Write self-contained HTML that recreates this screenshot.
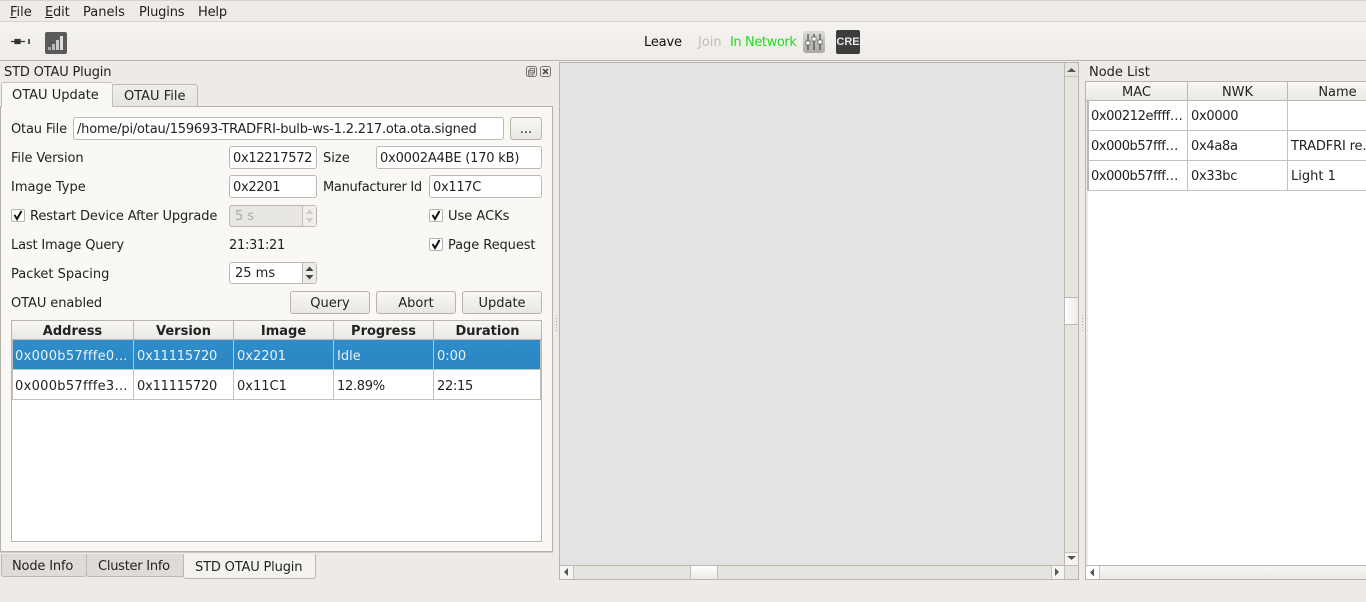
<!DOCTYPE html>
<html><head><meta charset="utf-8"><style>
*{box-sizing:border-box}
html,body{margin:0;padding:0;width:1366px;height:602px;overflow:hidden;background:#eeebe6}
body{position:relative;font-family:"DejaVu Sans",sans-serif;font-size:13px;color:#222}
.a{position:absolute}
.t{position:absolute;white-space:nowrap;line-height:16px;height:16px}
.n{letter-spacing:-.3px}
.s{letter-spacing:-.17px}
.f{position:absolute;background:#fff;border:1px solid #bdb9b2;border-radius:3px;height:23px;line-height:23px;padding-left:3px;white-space:nowrap;overflow:hidden;color:#222}
.b{position:absolute;border:1px solid #b8b4ad;border-radius:3px;height:23px;line-height:23px;text-align:center;background:linear-gradient(#f8f7f5,#e9e7e3);color:#222}
.c{position:absolute;width:14px;height:13px;border:1px solid #b8b4ad;border-radius:2px;background:#fff}
.hd{position:absolute;background:linear-gradient(#f8f7f5,#ebe9e5);border-right:1px solid #bdb9b2;border-bottom:1px solid #bdb9b2;text-align:center;height:19px;line-height:18px;padding-top:2px}
.ln{position:absolute;background:#c4c1bb}
.dot{position:absolute;width:1px;height:1px;background:#aaa}
</style></head><body>

<div class="a" style="left:0;top:0;width:1366px;height:1px;background:#d8d5cf"></div>
<div class="a" style="left:0;top:1px;width:1366px;height:20px;background:#efece7"></div>
<div class="a" style="left:0;top:21px;width:1366px;height:1px;background:#d6d3cd"></div>
<div class="a" style="left:0;top:22px;width:1366px;height:38px;background:linear-gradient(#f5f3ef,#efece7)"></div>
<div class="a" style="left:0;top:60px;width:1366px;height:1px;background:#b9b6b0"></div>
<span class="t" style="left:10px;top:5px"><u>F</u>ile</span>
<span class="t s" style="left:45px;top:5px"><u>E</u>dit</span>
<span class="t" style="left:83px;top:5px">Panels</span>
<span class="t s" style="left:139px;top:5px">Plugins</span>
<span class="t s" style="left:198px;top:5px">Help</span>

<svg class="a" style="left:10px;top:36px" width="22" height="12"><path d="M1 5.500H5M5 3.500H10V7.500H5zM10 5.500H15" stroke="#333" stroke-width="1.2" fill="#333"/><rect x="18" y="3" width="2" height="5" fill="#555"/></svg>
<svg class="a" style="left:45px;top:32px" width="22" height="22"><rect width="22" height="22" rx="2" fill="#5a5a5a"/><rect x="3" y="15" width="3" height="3" fill="#aaa"/><rect x="7" y="12" width="3" height="6" fill="#bbb"/><rect x="11" y="8" width="3" height="10" fill="#ccc"/><rect x="15" y="4" width="3" height="14" fill="#ddd"/></svg>

<span class="t s" style="left:644px;top:35px;color:#111">Leave</span>
<span class="t" style="left:698px;top:35px;color:#bdbdbd">Join</span>
<span class="t" style="left:730px;top:35px;color:#1fdc1f;letter-spacing:-.4px">In Network</span>
<svg class="a" style="left:803px;top:31px" width="22" height="22"><defs><linearGradient id="g" x1="0" y1="0" x2="0" y2="1"><stop offset="0" stop-color="#dddbd7"/><stop offset="1" stop-color="#a9a7a3"/></linearGradient></defs><rect width="22" height="22" rx="3" fill="url(#g)"/><path d="M5 3V19M11 3V19M17 3V19" stroke="#333" stroke-width="1"/><rect x="3" y="10" width="4" height="4" fill="#fff" stroke="#444" stroke-width=".6"/><rect x="9" y="6" width="4" height="4" fill="#fff" stroke="#444" stroke-width=".6"/><rect x="15" y="9" width="4" height="4" fill="#fff" stroke="#444" stroke-width=".6"/></svg>
<div class="a" style="left:836px;top:30px;width:24px;height:24px;background:#3d3d3d;border-radius:2px;color:#e6e6e6;font:bold 11px/25px 'Liberation Sans',sans-serif;text-align:center">CRE</div>

<span class="t s" style="left:4px;top:65px">STD OTAU Plugin</span>
<svg class="a" style="left:526px;top:66px" width="26" height="12"><rect x=".5" y=".5" width="10" height="10" rx="2" fill="none" stroke="#777"/><rect x="4" y="2.500" width="4.500" height="4.500" fill="none" stroke="#777"/><rect x="2.500" y="4.500" width="4.500" height="4.500" fill="none" stroke="#777"/><rect x="14.500" y=".5" width="10" height="10" rx="2" fill="none" stroke="#777"/><path d="M17 3L22 8M22 3L17 8" stroke="#555" stroke-width="1.800"/></svg>

<div class="a" style="left:0;top:106px;width:553px;height:446px;background:#f9f8f5;border:1px solid #b4b1ab;border-left-width:1px"></div>
<div class="a" style="left:0;top:552px;width:553px;height:1px;background:#d0cdc7"></div>
<div class="a" style="left:112px;top:84px;width:86px;height:23px;background:linear-gradient(#efedE9,#e7e5e0);border:1px solid #bdb9b2;border-radius:3px 3px 0 0"></div>
<div class="a" style="left:1px;top:82px;width:112px;height:25px;background:#f9f8f5;border:1px solid #c4c1bb;border-bottom:0;border-radius:3px 3px 0 0"></div>
<span class="t" style="left:12px;top:88px">OTAU Update</span>
<span class="t" style="left:124px;top:89px">OTAU File</span>

<span class="t s" style="left:11px;top:122px">Otau File</span>
<div class="f" style="left:73px;top:117px;width:431px;letter-spacing:-.2px">/home/pi/otau/159693-TRADFRI-bulb-ws-1.2.217.ota.ota.signed</div>
<div class="b" style="left:510px;top:117px;width:32px">...</div>
<span class="t" style="left:11px;top:151px;letter-spacing:-.1px">File Version</span>
<div class="f n" style="left:229px;top:146px;width:88px;padding-left:3px">0x12217572</div>
<span class="t" style="left:323px;top:151px">Size</span>
<div class="f" style="left:376px;top:146px;width:166px;letter-spacing:-.2px">0x0002A4BE (170 kB)</div>
<span class="t" style="left:11px;top:180px">Image Type</span>
<div class="f n" style="left:229px;top:175px;width:88px;padding-left:3px">0x2201</div>
<span class="t n" style="left:323px;top:180px">Manufacturer Id</span>
<div class="f n" style="left:429px;top:175px;width:113px">0x117C</div>

<div class="c" style="left:11px;top:209px"></div>
<svg class="a" style="left:11px;top:208px" width="14" height="14"><path d="M3.500 7L6 11L10.500 3" fill="none" stroke="#111" stroke-width="2"/></svg>
<span class="t" style="left:30px;top:209px;letter-spacing:-.11px">Restart Device After Upgrade</span>
<div class="f" style="left:229px;top:205px;width:88px;height:22px;background:#e9e7e3;color:#aaa;padding-left:5px;line-height:22px">5 s</div>
<div class="a" style="left:302px;top:206px;width:14px;height:20px;background:#f1efeb;border-left:1px solid #c4c1bb"></div>
<svg class="a" style="left:303px;top:207px" width="13" height="18"><path d="M2.500 7L6.500 2.500L10.500 7zM2.500 11L6.500 15.500L10.500 11z" fill="#cfccc7"/></svg>
<div class="c" style="left:429px;top:209px"></div>
<svg class="a" style="left:429px;top:208px" width="14" height="14"><path d="M3.500 7L6 11L10.500 3" fill="none" stroke="#111" stroke-width="2"/></svg>
<span class="t" style="left:448px;top:209px">Use ACKs</span>

<span class="t s" style="left:11px;top:238px">Last Image Query</span>
<span class="t n" style="left:229px;top:238px">21:31:21</span>
<div class="c" style="left:429px;top:238px"></div>
<svg class="a" style="left:429px;top:237px" width="14" height="14"><path d="M3.500 7L6 11L10.500 3" fill="none" stroke="#111" stroke-width="2"/></svg>
<span class="t" style="left:448px;top:238px;letter-spacing:-.08px">Page Request</span>

<span class="t" style="left:11px;top:267px">Packet Spacing</span>
<div class="f" style="left:229px;top:262px;width:88px;height:22px;padding-left:5px;line-height:22px">25 ms</div>
<div class="a" style="left:302px;top:263px;width:14px;height:20px;background:#ecebe7;border-left:1px solid #bdb9b2"></div>
<svg class="a" style="left:303px;top:264px" width="13" height="18"><path d="M2.500 7L6.500 2.500L10.500 7zM2.500 11L6.500 15.500L10.500 11z" fill="#444"/></svg>

<span class="t" style="left:11px;top:296px;letter-spacing:-.08px">OTAU enabled</span>
<div class="b" style="left:290px;top:291px;width:80px">Query</div>
<div class="b" style="left:376px;top:291px;width:80px">Abort</div>
<div class="b" style="left:462px;top:291px;width:80px">Update</div>

<div class="a" style="left:11px;top:320px;width:531px;height:222px;background:#fff;border:1px solid #b8b5af"></div>
<div class="hd" style="left:12px;top:321px;width:122px;font-weight:bold">Address</div>
<div class="hd" style="left:134px;top:321px;width:100px;font-weight:bold">Version</div>
<div class="hd" style="left:234px;top:321px;width:100px;font-weight:bold">Image</div>
<div class="hd" style="left:334px;top:321px;width:100px;font-weight:bold">Progress</div>
<div class="hd" style="left:434px;top:321px;width:107px;font-weight:bold;border-right:0">Duration</div>
<div class="a" style="left:13px;top:340px;width:528px;height:29px;background:linear-gradient(#2f8dc9,#2b86c2)"></div>
<div class="ln" style="left:12px;top:340px;width:1px;height:60px"></div>
<div class="ln" style="left:12px;top:369px;width:529px;height:1px"></div>
<div class="ln" style="left:12px;top:399px;width:529px;height:1px"></div>
<div class="ln" style="left:133px;top:340px;width:1px;height:60px"></div>
<div class="ln" style="left:233px;top:340px;width:1px;height:60px"></div>
<div class="ln" style="left:333px;top:340px;width:1px;height:60px"></div>
<div class="ln" style="left:433px;top:340px;width:1px;height:60px"></div>
<div class="ln" style="left:540px;top:340px;width:1px;height:60px"></div>
<span class="t" style="left:15px;top:349px;color:#e8f2f9;letter-spacing:.3px">0x000b57fffe0…</span>
<span class="t" style="left:137px;top:349px;color:#e8f2f9;letter-spacing:-.2px">0x11115720</span>
<span class="t" style="left:237px;top:349px;color:#e8f2f9">0x2201</span>
<span class="t" style="left:337px;top:349px;color:#e8f2f9">Idle</span>
<span class="t" style="left:437px;top:349px;color:#e8f2f9">0:00</span>
<span class="t" style="left:15px;top:379px;letter-spacing:.3px">0x000b57fffe3…</span>
<span class="t" style="left:137px;top:379px;letter-spacing:-.2px">0x11115720</span>
<span class="t" style="left:237px;top:379px">0x11C1</span>
<span class="t n" style="left:337px;top:379px">12.89%</span>
<span class="t n" style="left:437px;top:379px">22:15</span>

<div class="a" style="left:1px;top:554px;width:86px;height:23px;background:#dfdcd7;border:1px solid #bdb9b2;border-top:0;border-radius:0 0 3px 3px"></div>
<div class="a" style="left:86px;top:554px;width:98px;height:23px;background:#dfdcd7;border:1px solid #bdb9b2;border-top:0;border-radius:0 0 3px 3px"></div>
<div class="a" style="left:183px;top:554px;width:133px;height:25px;background:#f5f3ef;border:1px solid #bdb9b2;border-top:0;border-radius:0 0 3px 3px"></div>
<span class="t s" style="left:12px;top:559px">Node Info</span>
<span class="t" style="left:98px;top:559px;letter-spacing:-.25px">Cluster Info</span>
<span class="t s" style="left:195px;top:560px">STD OTAU Plugin</span>

<div class="dot" style="left:556px;top:315px;box-shadow:0 3px #aaa,0 6px #aaa,0 9px #aaa,0 12px #aaa,0 15px #aaa"></div>
<div class="dot" style="left:1082px;top:315px;box-shadow:0 3px #aaa,0 6px #aaa,0 9px #aaa,0 12px #aaa,0 15px #aaa"></div>

<div class="a" style="left:559px;top:62px;width:520px;height:518px;background:#e3e3e3;border:1px solid #b8b5af"></div>
<div class="a" style="left:1064px;top:63px;width:14px;height:502px;background:#e5e4df;border-left:1px solid #bdb9b2"></div>
<div class="a" style="left:560px;top:565px;width:518px;height:14px;background:#e5e4df;border-top:1px solid #bdb9b2"></div>
<div class="a" style="left:1064px;top:297px;width:14px;height:28px;background:linear-gradient(90deg,#fff,#ecebe7);border:1px solid #bdb9b2;border-right:0"></div>
<div class="a" style="left:690px;top:565px;width:28px;height:14px;background:linear-gradient(#fff,#ecebe7);border:1px solid #bdb9b2;border-bottom:0"></div>
<div class="a" style="left:1065px;top:63px;width:13px;height:14px;background:#e5e4df;border-bottom:1px solid #c4c1bb"></div>
<div class="a" style="left:1065px;top:552px;width:13px;height:13px;background:#f5f4f0;border-top:1px solid #c4c1bb"></div>
<div class="a" style="left:560px;top:566px;width:14px;height:13px;background:#f5f4f0;border-right:1px solid #c4c1bb"></div>
<div class="a" style="left:1051px;top:566px;width:14px;height:13px;background:#f5f4f0;border:solid #c4c1bb;border-width:0 1px"></div>
<svg class="a" style="left:560px;top:63px;overflow:visible" width="1" height="1">
<path d="M507 9L511.500 5L516 9z M507 493L511.500 497L516 493z" fill="#555"/>
<path d="M4 509L8 505V513z M495 505L499 509L495 513z" fill="#555"/>
</svg>

<span class="t" style="left:1089px;top:65px">Node List</span>
<div class="a" style="left:1085px;top:81px;width:281px;height:499px;background:#fff;border:1px solid #b8b5af;border-right:0"></div>
<div class="a" style="left:1086px;top:82px;width:2px;height:483px;background:#eeebe6"></div>
<div class="hd" style="left:1086px;top:82px;width:102px">MAC</div>
<div class="hd" style="left:1188px;top:82px;width:100px">NWK</div>
<div class="hd" style="left:1288px;top:82px;width:100px">Name</div>
<div class="ln" style="left:1087px;top:100px;width:2px;height:91px;background:#bdb9b2"></div>
<div class="ln" style="left:1087px;top:130px;width:279px;height:1px"></div>
<div class="ln" style="left:1087px;top:160px;width:279px;height:1px"></div>
<div class="ln" style="left:1087px;top:190px;width:279px;height:1px"></div>
<div class="ln" style="left:1187px;top:100px;width:1px;height:91px"></div>
<div class="ln" style="left:1287px;top:100px;width:1px;height:91px"></div>
<span class="t" style="left:1091px;top:109px;letter-spacing:-.4px">0x00212effff…</span>
<span class="t n" style="left:1191px;top:109px">0x0000</span>
<span class="t" style="left:1091px;top:139px;letter-spacing:-.45px">0x000b57fff…</span>
<span class="t n" style="left:1191px;top:139px">0x4a8a</span>
<span class="t" style="left:1291px;top:139px;letter-spacing:-.15px">TRADFRI re.</span>
<span class="t" style="left:1091px;top:169px;letter-spacing:-.45px">0x000b57fff…</span>
<span class="t n" style="left:1191px;top:169px">0x33bc</span>
<span class="t" style="left:1291px;top:169px">Light 1</span>
<div class="a" style="left:1086px;top:565px;width:280px;height:14px;background:linear-gradient(#f7f6f3,#eceae6);border-top:1px solid #bdb9b2"></div>
<div class="a" style="left:1086px;top:566px;width:14px;height:13px;background:#fff;border-right:1px solid #c4c1bb"></div>
<svg class="a" style="left:1086px;top:566px" width="14" height="13"><path d="M4 6.500L8 2.500V10.500z" fill="#555"/></svg>
</body></html>
